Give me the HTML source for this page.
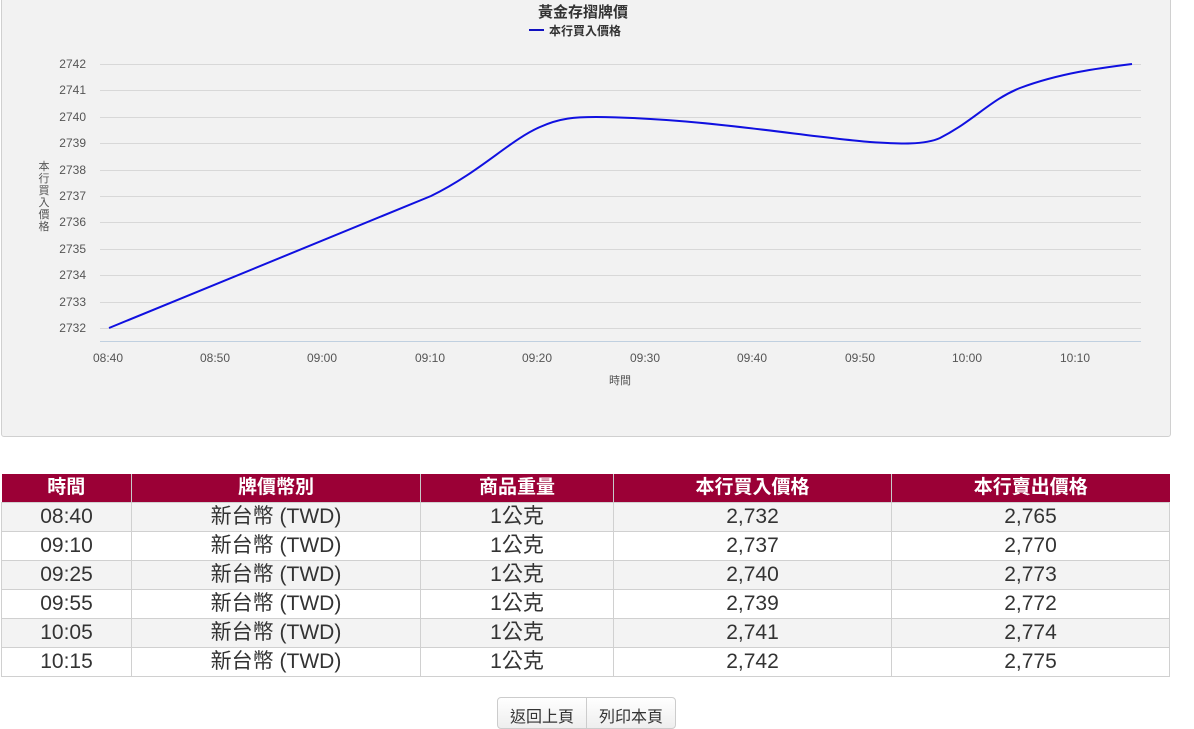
<!DOCTYPE html>
<html><head><meta charset="utf-8"><style>
body{margin:0;background:#fff;font-family:"Liberation Sans","Noto Sans CJK TC",sans-serif;width:1194px;height:719px;overflow:hidden;position:relative}
.panel{position:absolute;left:1px;top:-4px;width:1168px;height:439px;background:#f2f2f2;border:1px solid #d0d0d0;border-radius:3px}
table{position:absolute;left:1px;top:474px;width:1169px;border-collapse:collapse;font-size:21px;color:#333;table-layout:fixed}
th{background:#9b0036;color:#fff;font-weight:bold;height:28px;line-height:26px;padding:0;border-left:1px solid #c8c8c8;font-size:19px;overflow:hidden}
td{height:28px;line-height:26px;padding:0;text-align:center;border:1px solid #d0d0d0;overflow:hidden;white-space:nowrap}
tr:nth-child(even) td{background:#f3f3f3}
.btns{position:absolute;left:497px;top:697px;height:30px;display:flex;border:1px solid #ccc;border-radius:4px;background:linear-gradient(#fff,#eee);font-size:16px;color:#333}
.btns div{padding:5px 12px}
</style></head><body>
<div class="panel"></div>
<svg style="position:absolute;left:0;top:0" width="1194" height="440" font-family="Liberation Sans,Noto Sans CJK TC,sans-serif">
<text x="583" y="17" text-anchor="middle" font-size="15" font-weight="bold" fill="#333">黃金存摺牌價</text>
<line x1="529" y1="30" x2="544" y2="30" stroke="#1010c0" stroke-width="2"/>
<text x="549" y="35" font-size="12" font-weight="bold" fill="#333">本行買入價格</text>
<g stroke="#d8d8d8" stroke-width="1">
<line x1="100" x2="1141" y1="64.5" y2="64.5"/><line x1="100" x2="1141" y1="90.5" y2="90.5"/><line x1="100" x2="1141" y1="117.5" y2="117.5"/><line x1="100" x2="1141" y1="143.5" y2="143.5"/><line x1="100" x2="1141" y1="170.5" y2="170.5"/><line x1="100" x2="1141" y1="196.5" y2="196.5"/><line x1="100" x2="1141" y1="222.5" y2="222.5"/><line x1="100" x2="1141" y1="249.5" y2="249.5"/><line x1="100" x2="1141" y1="275.5" y2="275.5"/><line x1="100" x2="1141" y1="302.5" y2="302.5"/><line x1="100" x2="1141" y1="328.5" y2="328.5"/>
</g>
<line x1="100" x2="1141" y1="341.5" y2="341.5" stroke="#c0d0e0"/>
<g font-size="12" fill="#555" text-anchor="end">
<text x="86" y="68">2742</text><text x="86" y="94">2741</text><text x="86" y="121">2740</text><text x="86" y="147">2739</text><text x="86" y="174">2738</text><text x="86" y="200">2737</text><text x="86" y="226">2736</text><text x="86" y="253">2735</text><text x="86" y="279">2734</text><text x="86" y="306">2733</text><text x="86" y="332">2732</text>
</g>
<g font-size="11" fill="#555" text-anchor="middle">
<text x="44" y="170">本</text><text x="44" y="182">行</text><text x="44" y="194">買</text><text x="44" y="206">入</text><text x="44" y="218">價</text><text x="44" y="230">格</text>
</g>
<g font-size="12" fill="#555" text-anchor="middle">
<text x="108" y="362">08:40</text><text x="215" y="362">08:50</text><text x="322" y="362">09:00</text><text x="430" y="362">09:10</text><text x="537" y="362">09:20</text><text x="645" y="362">09:30</text><text x="752" y="362">09:40</text><text x="860" y="362">09:50</text><text x="967" y="362">10:00</text><text x="1075" y="362">10:10</text>
</g>
<text x="620" y="384" font-size="11" fill="#555" text-anchor="middle">時間</text>
<path d="M109,328 L431,196 C480,172 510,140 540,127 C560,118 575,117 596,117 C700,118 800,136 870,142 C900,144 925,145 940,138 C975,120 990,100 1020,88 C1060,73 1100,68 1132,64" fill="none" stroke="#1010e0" stroke-width="2"/>
</svg>
<table>
<colgroup><col style="width:130px"><col style="width:289px"><col style="width:193px"><col style="width:278px"><col></colgroup>
<tr><th style="border-left:none">時間</th><th>牌價幣別</th><th>商品重量</th><th>本行買入價格</th><th>本行賣出價格</th></tr>
<tr><td>08:40</td><td>新台幣 (TWD)</td><td>1公克</td><td>2,732</td><td>2,765</td></tr>
<tr><td>09:10</td><td>新台幣 (TWD)</td><td>1公克</td><td>2,737</td><td>2,770</td></tr>
<tr><td>09:25</td><td>新台幣 (TWD)</td><td>1公克</td><td>2,740</td><td>2,773</td></tr>
<tr><td>09:55</td><td>新台幣 (TWD)</td><td>1公克</td><td>2,739</td><td>2,772</td></tr>
<tr><td>10:05</td><td>新台幣 (TWD)</td><td>1公克</td><td>2,741</td><td>2,774</td></tr>
<tr><td>10:15</td><td>新台幣 (TWD)</td><td>1公克</td><td>2,742</td><td>2,775</td></tr>
</table>
<div class="btns"><div style="border-right:1px solid #ccc">返回上頁</div><div>列印本頁</div></div>
</body></html>
